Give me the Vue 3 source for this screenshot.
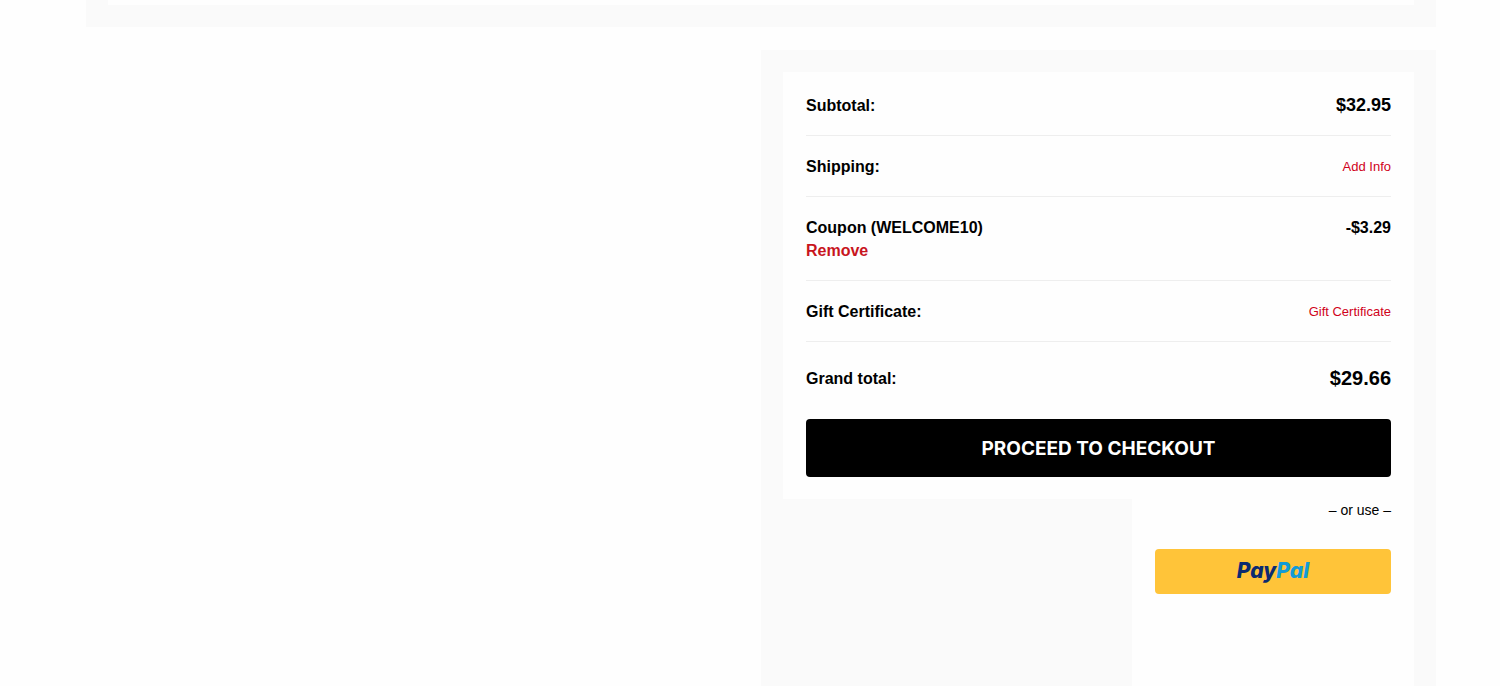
<script setup>
const rows = [
  { label: 'Subtotal:', value: '$32.95', kind: 'price large' },
  { label: 'Shipping:', link: 'Add Info' },
  { label: 'Coupon (WELCOME10)', action: 'Remove', value: '-$3.29', kind: 'price' },
  { label: 'Gift Certificate:', link: 'Gift Certificate' },
]
</script>

<template>
  <main class="cart">
    <section class="items" aria-label="Cart items">
      <div class="items-inner"></div>
    </section>
    <section class="panel" aria-label="Order summary">
      <div class="totals">
        <dl class="rows">
          <div v-for="row in rows" :key="row.label" class="row">
            <dt>
              {{ row.label }}
              <a v-if="row.action" class="remove" href="#">{{ row.action }}</a>
            </dt>
            <dd v-if="row.link"><a class="link" href="#">{{ row.link }}</a></dd>
            <dd v-else :class="row.kind">{{ row.value }}</dd>
          </div>
          <div class="row grand">
            <dt>Grand total:</dt>
            <dd class="price">$29.66</dd>
          </div>
        </dl>
        <button class="checkout" type="button">PROCEED TO CHECKOUT</button>
      </div>
      <div class="alternatives">
        <p class="or">– or use –</p>
        <button class="paypal" type="button" aria-label="PayPal">
          <span class="pay">Pay</span><span class="pal">Pal</span>
        </button>
      </div>
    </section>
  </main>
</template>

<style>
body {
  margin: 0;
  background: #fefefe;
}
</style>

<style scoped>
.cart {
  box-sizing: border-box;
  display: flex;
  flex-direction: column;
  min-height: 100vh;
  padding: 0 64px 0 86px;
  color: #000;
  font-family: "Liberation Sans", Arial, sans-serif;
  font-size: 16px;
  line-height: 23px;
}
.items {
  padding: 0 22px 22px;
  margin-bottom: 23px;
  background: #fafafa;
}
.items-inner {
  height: 5px;
  background: #fefefe;
}
.panel {
  box-sizing: border-box;
  display: flex;
  flex: 1;
  flex-direction: column;
  align-self: flex-end;
  width: 50%;
  padding: 22px 22px 0;
  background: #fafafa;
}
.totals {
  padding: 22px 23px;
  background: #fefefe;
}
.rows {
  margin: 0;
}
.row {
  display: flex;
  justify-content: space-between;
  gap: 20px;
  padding: 19px 0 18px;
  border-bottom: 1px solid #eee;
}
.row:first-child {
  padding-top: 0;
}
dt {
  font-weight: 700;
}
dd {
  margin: 0;
  text-align: right;
}
a {
  text-decoration: none;
}
.remove {
  display: block;
  color: #c8151d;
}
.link {
  display: block;
  color: #d0021b;
  font-size: 13px;
}
.price {
  font-weight: 700;
}
.large {
  font-size: 18px;
}
.grand {
  align-items: center;
  padding: 25px 0 29px;
  border-bottom: 0;
}
.grand .price {
  font-size: 20px;
}
.checkout {
  display: block;
  width: 100%;
  height: 58px;
  padding: 0;
  border: 0;
  border-radius: 4px;
  background: #000;
  color: #fff;
  font-family: Inter, sans-serif;
  font-size: 19px;
  font-weight: 700;
}
.alternatives {
  box-sizing: border-box;
  flex: 1;
  align-self: flex-end;
  width: 282px;
  padding: 0 23px 22px;
  background: #fefefe;
}
.or {
  margin: 0 0 27px;
  font-size: 14px;
  text-align: right;
}
.paypal {
  display: flex;
  align-items: center;
  justify-content: center;
  width: 100%;
  height: 45px;
  padding: 0 0 2px;
  border: 0;
  border-radius: 4px;
  background: #ffc439;
  font-family: Inter, sans-serif;
  font-size: 21px;
  font-style: italic;
  font-weight: 800;
}
.pay {
  color: #0b2b70;
}
.pal {
  color: #129bd7;
}
</style>
